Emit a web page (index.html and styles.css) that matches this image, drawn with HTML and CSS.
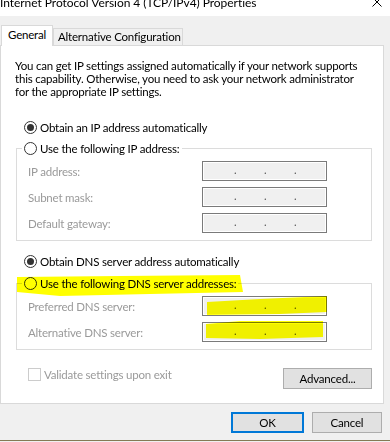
FILE: index.html
```html
<!DOCTYPE html>
<html>
<head>
<meta charset="utf-8">
<link rel="stylesheet" href="styles.css">
</head>
<body>
<div class="titlebar">
  <span class="title">Internet Protocol Version 4 (TCP/IPv4) Properties</span>
  <svg class="close" width="10" height="10" viewBox="0 0 10 10"><path d="M0.5 0.5 L9.5 9.5 M9.5 0.5 L0.5 9.5" stroke="#000" stroke-width="1" fill="none"/></svg>
</div>
<div class="tabs">
  <div class="tab active">General</div>
  <div class="tab">Alternative Configuration</div>
</div>
<div class="panel">
  <p class="intro">You can get IP settings assigned automatically if your network supports<br>this capability. Otherwise, you need to ask your network administrator<br>for the appropriate IP settings.</p>
  <div class="option first"><span class="radio checked"></span><span>Obtain an IP address automatically</span></div>
  <div class="group g1">
    <div class="legend"><span class="radio"></span><span>Use the following IP address:</span></div>
    <div class="field"><span class="label">IP address:</span><div class="ip"><span>.</span><span>.</span><span>.</span></div></div>
    <div class="field"><span class="label">Subnet mask:</span><div class="ip"><span>.</span><span>.</span><span>.</span></div></div>
    <div class="field"><span class="label">Default gateway:</span><div class="ip"><span>.</span><span>.</span><span>.</span></div></div>
  </div>
  <div class="option dns"><span class="radio checked"></span><span>Obtain DNS server address automatically</span></div>
  <div class="group g2">
    <div class="legend"><span class="radio"></span><span>Use the following DNS server addresses:</span></div>
    <div class="field"><span class="label">Preferred DNS server:</span><div class="ip"><span>.</span><span>.</span><span>.</span></div></div>
    <div class="field"><span class="label">Alternative DNS server:</span><div class="ip"><span>.</span><span>.</span><span>.</span></div></div>
  </div>
  <div class="footer-row">
    <div class="check"><span class="box"></span><span>Validate settings upon exit</span></div>
    <button class="btn adv">Advanced...</button>
  </div>
</div>
<div class="actions">
  <button class="btn ok">OK</button>
  <button class="btn cancel">Cancel</button>
</div>
<div class="bottom-line"></div>
<svg class="highlight" width="390" height="442" viewBox="0 0 390 442">
  <polygon points="17,277 120,276 240,275 243,292 150,294 60,296 17,292" fill="#ffff00"/>
  <polygon points="207,302 260,299 327,296 327,312 280,314 207,315" fill="#ffff00"/>
  <polygon points="206,324 240,321 323,321 323,337 260,339 206,338" fill="#ffff00"/>
</svg>
</body>
</html>
```
FILE: styles.css
```css
* { box-sizing: border-box; }
html, body { margin: 0; padding: 0; }
body {
  width: 390px;
  height: 442px;
  overflow: hidden;
  background: #f0f0f0;
  font-family: Lato, "Liberation Sans", sans-serif;
  font-size: 11.5px;
  letter-spacing: -0.2px;
  color: #000;
  position: relative;
}
.titlebar {
  height: 16px;
  background: #fff;
  display: flex;
  align-items: flex-start;
  overflow: hidden;
}
.title {
  font-size: 12px;
  letter-spacing: -0.05px;
  line-height: 12px;
  margin-top: -3px;
  white-space: nowrap;
}
.close {
  margin-left: auto;
  margin-right: 8px;
  margin-top: -3px;
  flex: none;
}
.tabs {
  display: flex;
  align-items: flex-end;
  height: 29px;
  padding-left: 1px;
}
.tab {
  border: 1px solid #d9d9d9;
  border-bottom: none;
  background: #f0f0f0;
  height: 17px;
  width: 130px;
  padding-left: 4px;
  line-height: 15px;
  white-space: nowrap;
}
.tab.active {
  background: #fff;
  width: 52px;
  height: 21px;
  padding-left: 6px;
  line-height: 18px;
  margin-bottom: -1px;
  position: relative;
  z-index: 1;
}
.panel {
  background: #fff;
  border: 1px solid #d9d9d9;
  width: 384px;
  height: 359px;
}
.intro {
  margin: 13px 0 0 14px;
  line-height: 13px;
  white-space: nowrap;
}
.option {
  display: flex;
  align-items: center;
  height: 14px;
  gap: 3px;
  margin-left: 23px;
}
.option.first { margin-top: 22px; }
.option.dns { margin-top: 13px; }
.radio {
  width: 13px;
  height: 13px;
  border: 1px solid #333;
  border-radius: 50%;
  background: #fff;
  display: flex;
  align-items: center;
  justify-content: center;
  flex: none;
}
.radio.checked::after {
  content: "";
  width: 7px;
  height: 7px;
  border-radius: 50%;
  background: #333;
}
.group {
  margin-left: 15px;
  width: 356px;
  border: 1px solid #dcdcdc;
  padding: 0 0 7px 11px;
}
.g1 { margin-top: 14px; }
.g2 { margin-top: 15px; }
.legend {
  display: flex;
  align-items: center;
  gap: 3px;
  width: fit-content;
  height: 14px;
  margin: -8px 0 0 -6px;
  padding: 0 2px;
  background: #fff;
  white-space: nowrap;
}
.field {
  display: grid;
  grid-template-columns: 174px 125px;
  align-items: center;
  height: 20px;
  margin-top: 6px;
}
.label {
  color: #9a9a9a;
  white-space: nowrap;
}
.ip {
  height: 20px;
  border: 1px solid #7a7a7a;
  box-shadow: inset 0 0 0 1px #fff;
  background: #f0f0f0;
  display: flex;
  padding-left: 31px;
  line-height: 15px;
  color: #555;
  font-size: 11px;
  letter-spacing: 0;
}
.ip span { width: 30px; }
.footer-row {
  display: flex;
  justify-content: space-between;
  align-items: flex-start;
  margin: 18px 11px 0 27px;
}
.check {
  display: flex;
  align-items: center;
  gap: 3px;
  height: 13px;
  color: #9a9a9a;
}
.box {
  width: 13px;
  height: 13px;
  border: 1px solid #cccccc;
  background: #fff;
  flex: none;
}
.btn {
  font-family: Lato, "Liberation Sans", sans-serif;
  font-size: 11.5px;
  letter-spacing: -0.2px;
  color: #000;
  background: #e1e1e1;
  border: 1px solid #adadad;
  height: 21px;
  padding: 0;
  margin: 0;
  line-height: 18px;
}
.adv { width: 89px; }
.actions {
  display: flex;
  justify-content: flex-end;
  gap: 8px;
  padding-right: 8px;
  margin-top: 8px;
}
.ok { width: 73px; border: 2px solid #0078d7; }
.cancel { width: 70px; }
.bottom-line {
  margin-top: 7px;
  height: 1px;
  background: #857a55;
}
.highlight {
  position: absolute;
  left: 0;
  top: 0;
  mix-blend-mode: multiply;
  pointer-events: none;
}
```
